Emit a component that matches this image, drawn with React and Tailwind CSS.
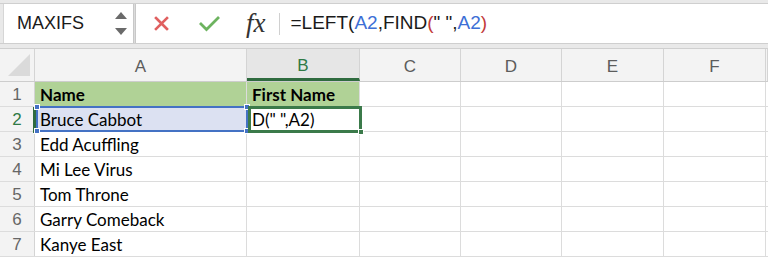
import React from 'react';

const cols = [
  { key: 'A', w: 'w-[212px]' },
  { key: 'B', w: 'w-[113px]' },
  { key: 'C', w: 'w-[101px]' },
  { key: 'D', w: 'w-[101px]' },
  { key: 'E', w: 'w-[102px]' },
  { key: 'F', w: 'w-[102px]' },
  { key: 'G', w: 'flex-1' },
];

const names = ['Bruce Cabbot', 'Edd Acuffling', 'Mi Lee Virus', 'Tom Throne', 'Garry Comeback', 'Kanye East'];

const Handle = ({ className }) => (
  <div className={`absolute w-[6px] h-[6px] border border-white ${className}`} />
);

const FormulaBar = () => (
  <div className="h-[49px] bg-[#e9e9e9] pt-[3px] border-b border-[#cfcfcf]">
    <div className="flex h-[41px] border-y border-[#cfcfcf]">
      <div className="ml-[3px] w-[130px] bg-white border-l border-[#d6d6d6] flex items-center justify-between pl-[13px] pr-[6px]">
        <span className="text-[18px] text-[#1a1a1a]">MAXIFS</span>
        <div className="flex flex-col gap-[9px]">
          <svg width="12" height="7" viewBox="0 0 12 7"><path d="M6 0L12 7H0Z" fill="#6a6a6a" /></svg>
          <svg width="12" height="7" viewBox="0 0 12 7"><path d="M0 0H12L6 7Z" fill="#6a6a6a" /></svg>
        </div>
      </div>
      <div className="w-[3px] bg-[#dcdcdc] border-x border-[#c8c8c8]" />
      <div className="flex-1 bg-white flex items-center">
        <svg className="ml-[18px]" width="15" height="15" viewBox="0 0 15 15">
          <path d="M2 2L13 13M13 2L2 13" stroke="#e06060" strokeWidth="2.6" strokeLinecap="square" />
        </svg>
        <svg className="ml-[29px]" width="23" height="17" viewBox="0 0 23 17">
          <path d="M2 8L8.5 14.5L21 2" stroke="#6db35f" strokeWidth="2.8" fill="none" />
        </svg>
        <span className="ml-[25px] text-[27px] leading-none italic text-[#333]" style={{ fontFamily: '"Liberation Serif", serif' }}>fx</span>
        <div className="ml-[13px] w-px h-[22px] bg-[#d0d0d0]" />
        <span className="ml-[11px] text-[19px] text-[#1a1a1a] whitespace-pre">
          =LEFT(<span className="text-[#3d6fd6]">A2</span>,FIND<span className="text-[#c23a3a]">(</span>" ",<span className="text-[#3d6fd6]">A2</span><span className="text-[#c23a3a]">)</span>
        </span>
      </div>
    </div>
  </div>
);

const HeaderRow = () => (
  <div className="flex h-[33px] bg-[#f3f3f3] border-b border-[#cdcdcd]">
    <div className="w-[35px] border-r border-[#d4d4d4] relative">
      <svg className="absolute right-[4px] bottom-[5px]" width="22" height="22" viewBox="0 0 22 22"><path d="M22 0V22H0Z" fill="#dadada" /></svg>
    </div>
    {cols.map((c) => (
      <div
        key={c.key}
        className={`${c.w} shrink-0 flex items-center justify-center text-[17px] border-r border-[#d4d4d4] ${c.key === 'B' ? 'text-[#2f7a45] bg-[#e6e6e6] border-b-[3px] border-b-[#2f6b3f] pt-[5px]' : 'text-[#5c5c5c] pt-[3px]'}`}
      >
        {c.key !== 'G' && c.key}
      </div>
    ))}
  </div>
);

const Row = ({ n, a, b, header }) => (
  <div className="flex h-[25px] border-b border-[#dcdcdc]">
    <div className={`w-[35px] shrink-0 bg-[#f3f3f3] border-r border-[#d4d4d4] flex items-center justify-center pt-[2px] text-[17px] ${n === 2 ? 'text-[#2f7a45]' : 'text-[#666]'}`} style={{ fontFamily: '"Liberation Sans", sans-serif' }}>
      {n}
    </div>
    {cols.map((c) => {
      let cls = '';
      let text = null;
      if (c.key === 'A') {
        text = a;
        if (header) cls = 'bg-[#b0d296] font-bold';
        if (n === 2) cls = 'bg-[#dce1f2]';
      }
      if (c.key === 'B') {
        text = b;
        if (header) cls = 'bg-[#b0d296] font-bold';
      }
      return (
        <div key={c.key} className={`${c.w} shrink-0 border-r border-[#dcdcdc] flex items-center pl-[5px] pt-[2px] text-[17px] text-black whitespace-pre overflow-hidden ${cls}`}>
          {text}
        </div>
      );
    })}
  </div>
);

export default function App() {
  return (
    <div className="w-[768px] h-[257px] overflow-hidden bg-white" style={{ fontFamily: '"Liberation Sans", Arial, sans-serif' }}>
      <FormulaBar />
      <HeaderRow />
      <div className="relative" style={{ fontFamily: 'Lato, "Open Sans", sans-serif' }}>
        <Row n={1} a="Name" b="First Name" header />
        <Row n={2} a={names[0]} b={'D(" ",A2)'} />
        {names.slice(1).map((name, i) => (
          <Row key={name} n={i + 3} a={name} />
        ))}
        {/* row 2 header highlight */}
        <div className="absolute left-[33px] top-[25px] w-[3px] h-[26px] bg-[#2f6b3f]" />
        {/* reference range A2 */}
        <div className="absolute left-[36px] top-[24px] w-[212px] h-[26px] border-2 border-[#4472c4] pointer-events-none">
          <Handle className="-left-[4px] -top-[4px] bg-[#4472c4]" />
          <Handle className="-right-[4px] -top-[4px] bg-[#4472c4]" />
          <Handle className="-left-[4px] -bottom-[4px] bg-[#4472c4]" />
          <Handle className="-right-[4px] -bottom-[4px] bg-[#4472c4]" />
        </div>
        {/* active cell B2 */}
        <div className="absolute left-[248px] top-[24px] w-[114px] h-[27px] border-[3px] border-[#3b7a4a] pointer-events-none">
          <Handle className="-right-[5px] -bottom-[5px] bg-[#3b7a4a]" />
        </div>
      </div>
    </div>
  );
}
